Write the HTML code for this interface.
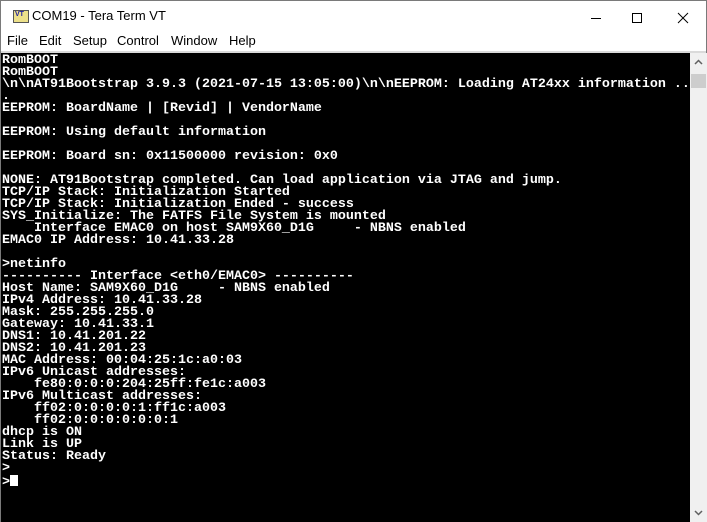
<!DOCTYPE html>
<html><head><style>
*{margin:0;padding:0;box-sizing:border-box}
body{width:707px;height:522px;overflow:hidden;background:#fff;position:relative;font-family:"Segoe UI","Liberation Sans",sans-serif}
.win{position:absolute;left:0;top:0;width:707px;height:522px;border:1px solid #7a7a7a;background:#fff}
.title{position:absolute;left:0;top:0;width:705px;height:31px;background:#fff}
.title .t{position:absolute;left:31px;top:7px;font-size:13px;color:#000}
.icon{position:absolute;left:12px;top:9px;width:16px;height:13px;background:#ece08a;border:1px solid #555}
.icon span{position:absolute;left:1px;top:0px;font-size:7px;font-weight:bold;color:#2020a0;font-family:"Liberation Sans",sans-serif}
.menu{position:absolute;left:0;top:31px;width:705px;height:19px;font-size:13px}
.menu span{position:absolute;top:1px}
.sep{position:absolute;left:0;top:50px;width:705px;height:2px;background:#dadada}
.term{position:absolute;left:0;top:52px;width:689px;height:469px;background:#000;overflow:hidden}
pre{position:absolute;left:1px;top:2px;font-family:"Liberation Mono",monospace;font-weight:bold;font-size:13.33px;line-height:12px;color:#fff;letter-spacing:0}
.cur{display:inline-block;width:8px;height:11px;background:#fff;vertical-align:-1px}
.sb{position:absolute;left:689px;top:52px;width:17px;height:469px;background:#f0f0f0}
.thumb{position:absolute;left:1px;top:21px;width:15px;height:14px;background:#cdcdcd}
</style></head><body>
<div class="win">
<div class="title">
<div class="icon"><span>VT</span></div>
<div class="t">COM19 - Tera Term VT</div>
<svg style="position:absolute;left:590px;top:10px" width="110" height="14"><line x1="0" y1="7.5" x2="10" y2="7.5" stroke="#000"/><rect x="41.5" y="2.5" width="9" height="9" fill="none" stroke="#000"/><line x1="87" y1="2" x2="97" y2="12" stroke="#000"/><line x1="97" y1="2" x2="87" y2="12" stroke="#000"/></svg>
</div>
<div class="menu"><span style="left:6px">File</span><span style="left:38px">Edit</span><span style="left:72px">Setup</span><span style="left:116px">Control</span><span style="left:170px">Window</span><span style="left:228px">Help</span></div>
<div class="sep"></div>
<div class="term"><pre>RomBOOT
RomBOOT
\n\nAT91Bootstrap 3.9.3 (2021-07-15 13:05:00)\n\nEEPROM: Loading AT24xx information ..
.
EEPROM: BoardName | [Revid] | VendorName

EEPROM: Using default information

EEPROM: Board sn: 0x11500000 revision: 0x0

NONE: AT91Bootstrap completed. Can load application via JTAG and jump.
TCP/IP Stack: Initialization Started
TCP/IP Stack: Initialization Ended - success
SYS_Initialize: The FATFS File System is mounted
    Interface EMAC0 on host SAM9X60_D1G     - NBNS enabled
EMAC0 IP Address: 10.41.33.28

>netinfo
---------- Interface &lt;eth0/EMAC0&gt; ----------
Host Name: SAM9X60_D1G     - NBNS enabled
IPv4 Address: 10.41.33.28
Mask: 255.255.255.0
Gateway: 10.41.33.1
DNS1: 10.41.201.22
DNS2: 10.41.201.23
MAC Address: 00:04:25:1c:a0:03
IPv6 Unicast addresses:
    fe80:0:0:0:204:25ff:fe1c:a003
IPv6 Multicast addresses:
    ff02:0:0:0:0:1:ff1c:a003
    ff02:0:0:0:0:0:0:1
dhcp is ON
Link is UP
Status: Ready
&gt;
&gt;<span class="cur"></span></pre></div>
<div class="sb"><div class="thumb"></div>
<svg style="position:absolute;left:4px;top:6px" width="9" height="6"><polyline points="1,5 4.5,1.5 8,5" fill="none" stroke="#606060" stroke-width="1.5"/></svg>
<svg style="position:absolute;left:4px;top:457px" width="9" height="6"><polyline points="1,1 4.5,4.5 8,1" fill="none" stroke="#606060" stroke-width="1.5"/></svg>
</div>
</div>
</body></html>
